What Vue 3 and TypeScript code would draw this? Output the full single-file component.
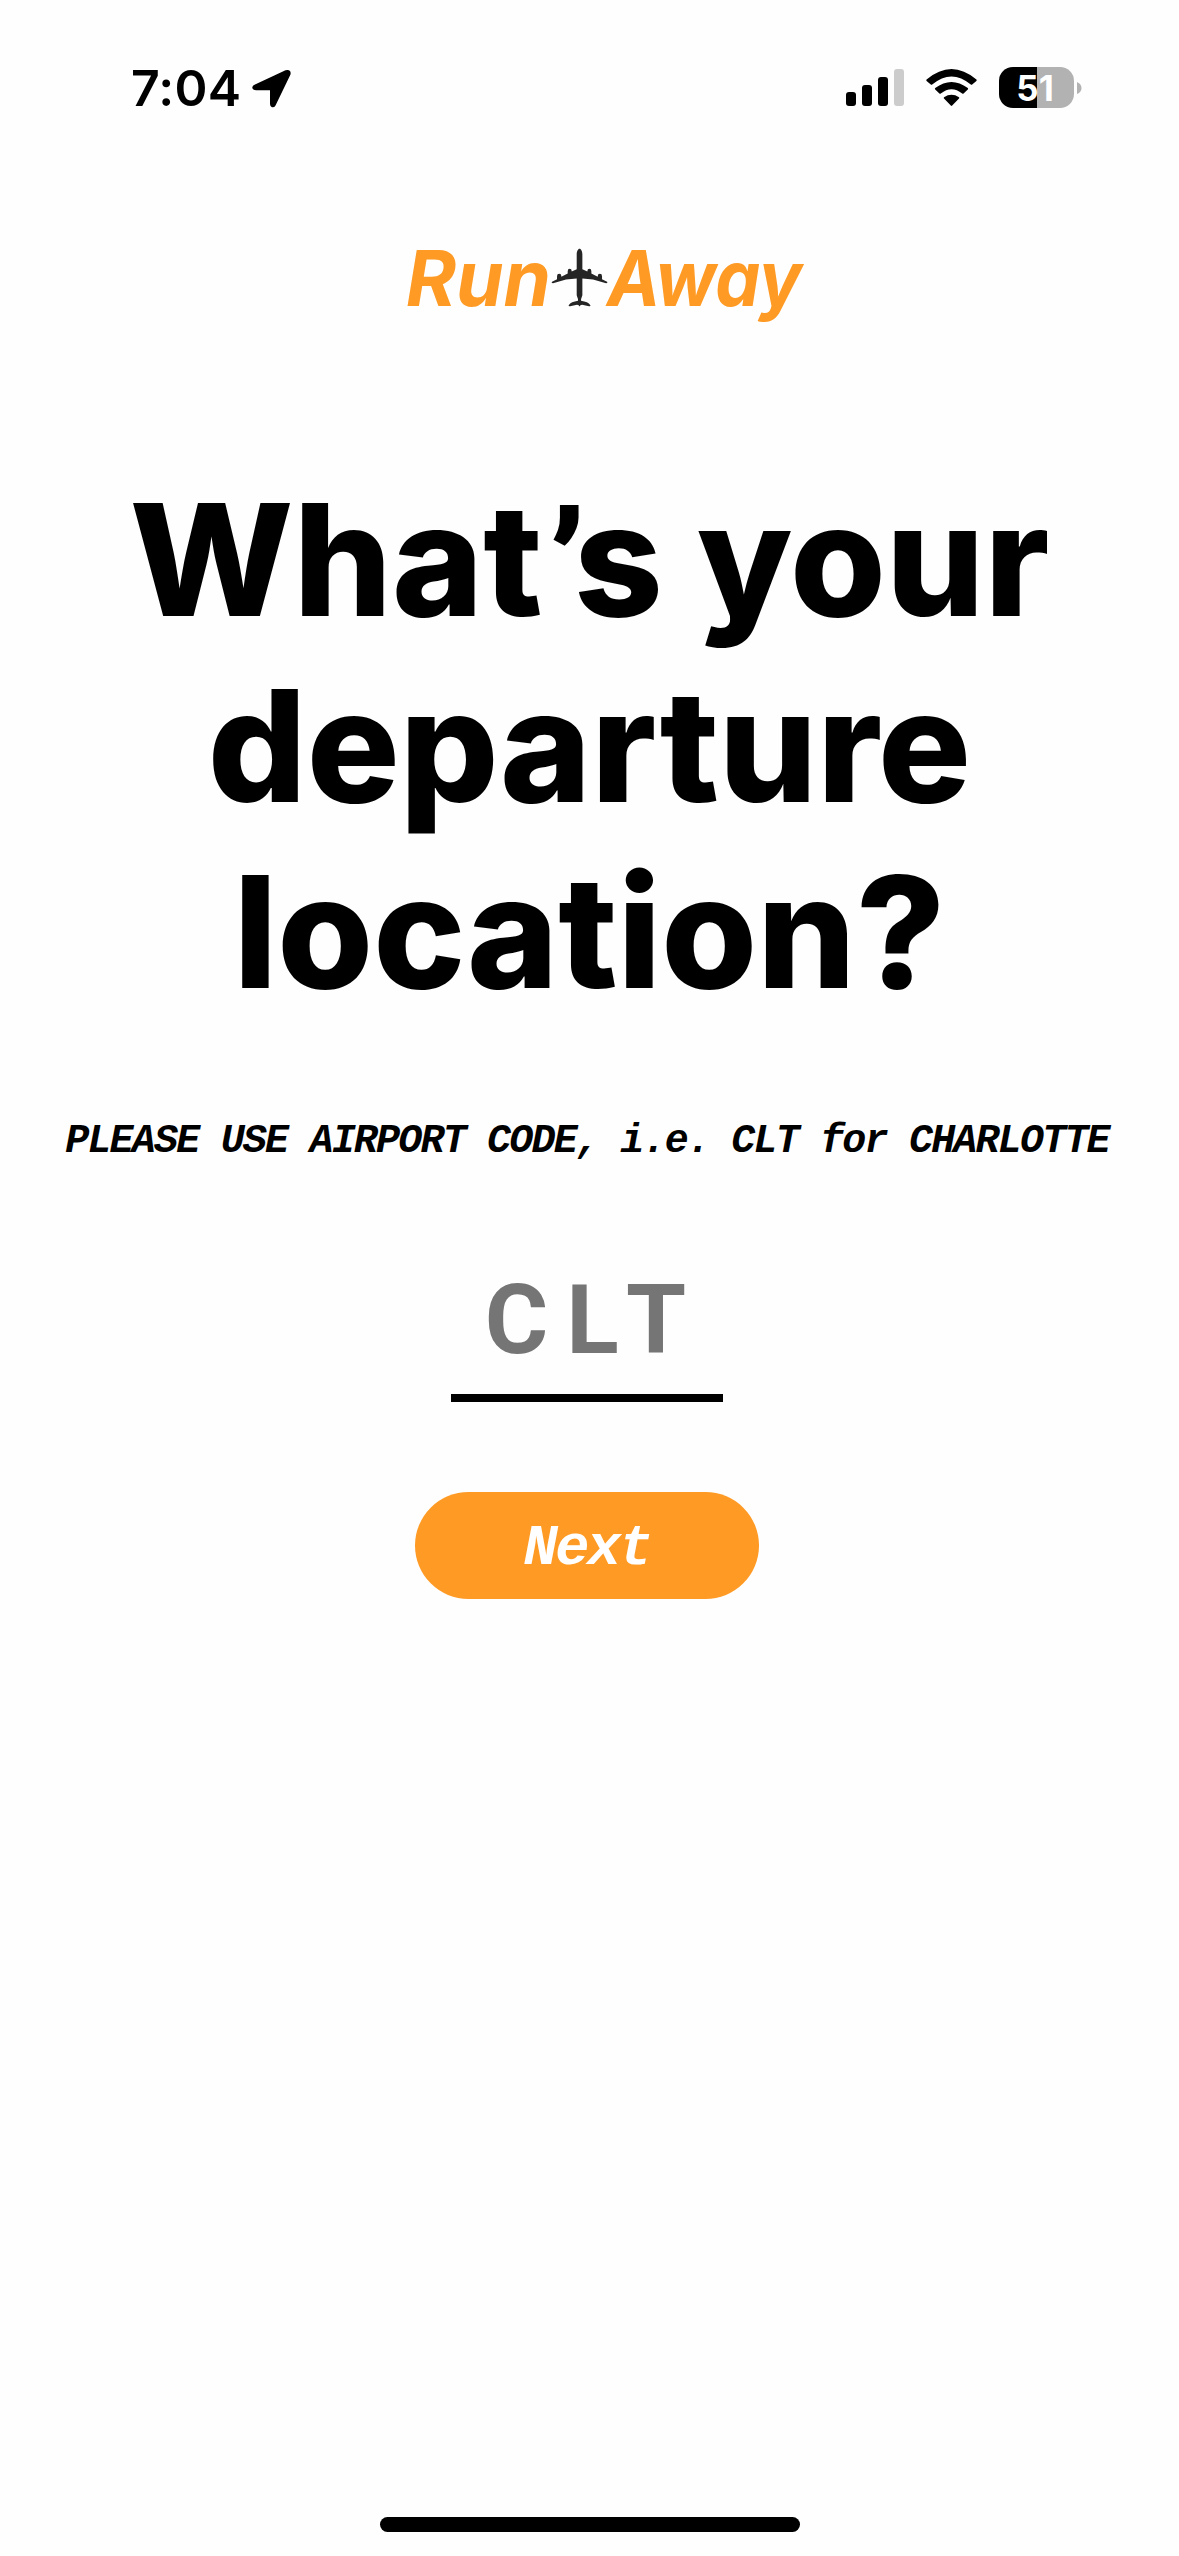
<script setup lang="ts">
import { ref } from 'vue'

const time = '7:04'
const battery = 51
const airportCode = ref('')
</script>

<template>
  <div class="screen">
    <header class="status">
      <div class="clock">
        <span class="time">{{ time }}</span>
        <svg class="arrow" width="39" height="39" viewBox="0 0 39 39">
          <path d="M3 15.5 33.5 1.3Q36.500 .2 38 2Q39.300 4 38 6.500L23.500 36.500Q22.300 38.600 20 38.300Q18 37.500 18 35V21.200H4Q.7 21.100.3 18.800Q0 16.800 3 15.500Z" />
        </svg>
      </div>
      <div class="indicators">
        <svg width="58" height="38" viewBox="0 0 58 38">
          <rect x="0" y="23" width="10" height="14" rx="3" />
          <rect x="16" y="16" width="10" height="21" rx="3" />
          <rect x="32" y="8" width="10" height="29" rx="3" />
          <rect x="48" y="0" width="10" height="37" rx="3" fill="#cccccc" />
        </svg>
        <svg width="51" height="38" viewBox="0 0 51 38">
          <path d="M.6 10.500Q25.500-10.500 50.400 10.500Q51 11.200 50.400 11.900L46.200 15.500Q45.500 16 44.800 15.500Q25.500-.7 6.200 15.500Q5.500 16 4.800 15.500L.6 11.900Q0 11.200.6 10.500Z" />
          <path d="M9.200 19Q25.500 6.800 41.800 19Q42.500 19.800 41.800 20.500L37.600 24.500Q36.900 25 36.200 24.500Q25.500 15.800 14.800 24.500Q14.100 25 13.400 24.500L9.200 20.500Q8.500 19.800 9.200 19Z" />
          <path d="M18 28.200Q25.500 23.300 33 28.200Q33.600 28.900 33 29.500L26.200 36.600Q25.500 37.200 24.800 36.600L18 29.500Q17.400 28.900 18 28.200Z" />
        </svg>
        <div class="battery">
          <div class="cell">{{ battery }}</div>
          <svg class="cap" width="5" height="12" viewBox="0 0 5 12"><path d="M0 0Q4.500 2 4.500 6T0 12Z" fill="#b2b2b2" /></svg>
        </div>
      </div>
    </header>

    <svg class="logo" width="400" height="80" viewBox="0 0 400 80" role="img" aria-label="Run Away">
      <text class="wordmark" x="0" y="57" textLength="145" lengthAdjust="spacingAndGlyphs">Run</text>
      <g transform="translate(133.700 -13.800) scale(.33333)" fill="#252525">
        <path d="M119.500 41C124 41 128 49 128 58V102L143 109V108Q143 101 149 101T155 108V115L174 125V123Q174 116 180.500 116T187 123V132L202 140Q205 143 199 144L160 133L128 130V180L124 192V197Q145 200 152 210Q153 214 148 213L127 209Q121 209 119.500 214Q118 209 112 209L91 213Q86 214 87 210Q94 200 115 197V192L111 180V130L79 133L40 144Q34 143 37 140L52 132V123Q52 116 58.500 116T65 123V125L84 115V108Q84 101 90 101T96 108V109L111 102V58C111 49 115 41 119.500 41Z" />
      </g>
      <text class="wordmark" x="201" y="57" textLength="195" lengthAdjust="spacingAndGlyphs">Away</text>
    </svg>

    <h1 class="title">
      <span class="line">What<span class="quote">’</span>s your</span>
      <span class="line">departure</span>
      <span class="line">location?</span>
    </h1>

    <p class="hint">PLEASE USE AIRPORT CODE, i.e. CLT for CHARLOTTE</p>

    <input v-model="airportCode" class="code" type="text" maxlength="3" placeholder="CLT" />

    <button class="next" type="button">Next</button>

    <div class="home"></div>
  </div>
</template>

<style>
body {
  margin: 0;
  background: #fefefe;
}
</style>

<style scoped>
.screen {
  box-sizing: border-box;
  width: 1179px;
  height: 2556px;
  display: flex;
  flex-direction: column;
  align-items: center;
  background: #fefefe;
  color: #000;
  font-family: Inter, "Liberation Sans", sans-serif;
  overflow: hidden;
}
.status {
  box-sizing: border-box;
  width: 100%;
  height: 140px;
  padding: 58px 97px 0 131px;
  display: flex;
  justify-content: space-between;
  align-items: flex-start;
}
.clock {
  display: flex;
  gap: 12px;
}
.time {
  width: 109px;
  font-size: 50px;
  line-height: 60px;
  font-weight: 600;
  letter-spacing: 0.2px;
  white-space: nowrap;
}
.arrow {
  margin-top: 11px;
}
.indicators {
  display: flex;
  gap: 22px;
  padding-top: 11px;
}
.battery {
  display: flex;
  align-items: center;
  gap: 3px;
  height: 41px;
  margin-top: -2px;
}
.cell {
  box-sizing: border-box;
  width: 75px;
  height: 41px;
  padding-right: 3px;
  border-radius: 14px;
  background: linear-gradient(90deg, #000 38px, #b2b2b2 38px);
  color: #fff;
  font-size: 35px;
  line-height: 42px;
  font-weight: 700;
  text-align: center;
}
.logo {
  display: block;
  flex: none;
  margin: 109px 0 0 33px;
  overflow: visible;
}
.wordmark {
  font-family: Inter, sans-serif;
  font-size: 77px;
  font-weight: 700;
  font-style: italic;
  font-feature-settings: "cv11";
  fill: #ff9a24;
}
.title {
  margin: 138px 0 0;
  font-size: 155px;
  line-height: 186px;
  font-weight: 800;
  text-align: center;
}
.line {
  display: block;
  height: 186px;
  white-space: nowrap;
}
.quote {
  margin: 0 -12px 0 6px;
  font-family: Roboto, sans-serif;
  font-weight: 900;
  line-height: 0;
  vertical-align: -6px;
}
.hint {
  margin: 87px 5px 0 0;
  font-family: "Liberation Mono", monospace;
  font-size: 40px;
  line-height: 60px;
  font-weight: 700;
  font-style: italic;
  letter-spacing: -1.8px;
  white-space: nowrap;
}
.code {
  box-sizing: border-box;
  width: 272px;
  height: 150px;
  margin: 80px 5px 0 0;
  padding: 0 0 6px 15px;
  border: 0;
  border-bottom: 8px solid #000;
  border-radius: 0;
  outline: 0;
  background: transparent;
  color: #000;
  font-family: Roboto, sans-serif;
  font-size: 97px;
  font-weight: 700;
  letter-spacing: 18px;
  text-align: center;
}
.code::placeholder {
  color: #757575;
  opacity: 1;
}
.next {
  width: 344px;
  height: 107px;
  margin: 90px 5px 0 0;
  padding: 8px 0 0;
  border: 0;
  border-radius: 54px;
  background: #ff9a24;
  color: #fff;
  font-family: "Liberation Mono", monospace;
  font-size: 57px;
  line-height: 99px;
  font-weight: 700;
  font-style: italic;
  letter-spacing: -2.5px;
}
.home {
  width: 420px;
  height: 15px;
  margin: auto 0 24px;
  border-radius: 8px;
  background: #000;
}
</style>
